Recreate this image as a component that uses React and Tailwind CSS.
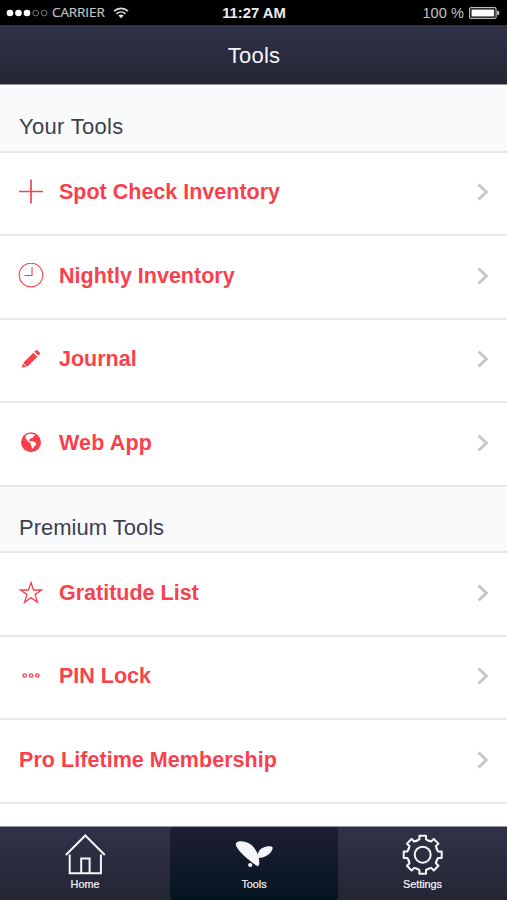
const PlusIcon = () => (
  <svg width="26" height="26" viewBox="0 0 26 26" fill="none" stroke="currentColor" strokeWidth="1.7">
    <path d="M13 .500v24M1 12.500h24" />
  </svg>
);

const ClockIcon = () => (
  <svg width="26" height="26" viewBox="0 0 26 26" fill="none" stroke="currentColor" strokeWidth="1.1">
    <circle cx="13" cy="12" r="11.8" />
    <path d="M14 4v8.500H6.500" />
  </svg>
);

const PencilIcon = () => (
  <svg width="26" height="26" viewBox="0 0 26 26" fill="currentColor">
    <path d="M3.800 21.800l1.100-4.300 3.300 3.300z" />
    <path d="M5.500 16.600L15.400 6.700l4 4-9.900 9.900q-1.900-.3-2.100-1.900-1.700-.2-1.900-2.100z" />
    <path d="M16.400 5.700l1.400-1.400q.9-.7 1.800.1l2 2q.8.900.1 1.800l-1.400 1.400z" />
  </svg>
);

const GlobeIcon = () => (
  <svg width="26" height="26" viewBox="0 0 26 26">
    <circle cx="13" cy="12.200" r="10" fill="currentColor" />
    <path
      d="M8 5.300l2.500-1.300 3-.2 2.600.8 1 1.100-1.500.5-.7 1.500-1.900.6-1.200 1.300-1.400.1.900 1.100 1.700.7 1.900-.2 2.200 1 1.200 1.600-.9 1.600-1.300.9-.9 1.600-1.300 1-.2-2.800-1.100-1.500.2-1.600-2.300-1.200-1.800-2.300-1.300-1.900z"
      fill="#fff"
    />
  </svg>
);

const StarIcon = () => (
  <svg width="26" height="26" viewBox="0 0 26 26" fill="none" stroke="currentColor" strokeWidth="1.3">
    <path d="M13 2.500l2.500 7.500h8l-6.500 4.600 2.500 7.700L13 17.600l-6.500 4.700L9 14.600 2.500 10h8z" />
  </svg>
);

const DotsIcon = () => (
  <svg width="26" height="26" viewBox="0 0 26 26" fill="none" stroke="currentColor" strokeWidth="1.3">
    <circle cx="6.700" cy="12.500" r="1.700" />
    <circle cx="13" cy="12.500" r="1.700" />
    <circle cx="19.300" cy="12.500" r="1.700" />
  </svg>
);

const HomeIcon = () => (
  <svg width="42" height="42" viewBox="0 0 42 42" fill="none" stroke="currentColor" strokeWidth="2">
    <path d="M1.800 21L21.300 1.500 40.800 21" />
    <path d="M5.700 20.500v18.700h31.200V20.500" />
    <path d="M17.200 39V24.500h8.400V39" />
  </svg>
);

const LeafIcon = () => (
  <svg width="42" height="42" viewBox="0 0 42 42" fill="currentColor">
    <path d="M3.300 8.800C5.200 6.600 12.500 6.700 17.500 10.300c5.600 4.300 9.200 11.500 8.800 19.500-.2 2.200-1.400 2.800-2.900 1.700C17.300 26.800 7.500 20 3.600 12.700c-.8-1.600-1.100-2.900-.3-3.900z" />
    <path d="M25.400 23.900c-1.300-4.300.2-7.800 4-9.900 3.200-1.700 7.400-2.200 9.500-1.300 1 .4.900 1.600.4 2.800-1.700 4.500-6.500 8.200-13.900 8.400z" />
    <circle cx="17.200" cy="31" r="2.100" />
  </svg>
);

const TEETH = [0, 45, 90, 135, 180, 225, 270, 315];

const GearIcon = () => (
  <svg width="42" height="42" viewBox="0 0 42 42" fill="none" stroke="currentColor" strokeWidth="2">
    <circle cx="20.700" cy="20.700" r="8" />
    {TEETH.map((angle) => (
      <path
        key={angle}
        transform={`rotate(${angle} 20.7 20.700)`}
        d="M14.600 6.800L17.400 5.400V1.700h6.600v3.700l2.800 1.400"
        strokeLinejoin="round"
        strokeLinecap="round"
      />
    ))}
  </svg>
);

const Chevron = () => (
  <svg className="shrink-0" width="12" height="18" viewBox="0 0 12 18" fill="none" stroke="#c7c7c9" strokeWidth="3">
    <path d="M1.500 1.500L9.300 9l-7.800 7.500" />
  </svg>
);

const yourTools = [
  { icon: PlusIcon, label: "Spot Check Inventory" },
  { icon: ClockIcon, label: "Nightly Inventory" },
  { icon: PencilIcon, label: "Journal" },
  { icon: GlobeIcon, label: "Web App", spacing: "tracking-[0.15px]" },
];

const premiumTools = [
  { icon: StarIcon, label: "Gratitude List" },
  { icon: DotsIcon, label: "PIN Lock" },
  { label: "Pro Lifetime Membership", spacing: "pl-px tracking-[0.05px]" },
];

const tabs = [
  { icon: HomeIcon, label: "Home" },
  { icon: LeafIcon, label: "Tools", active: true },
  { icon: GearIcon, label: "Settings" },
];

function StatusBar() {
  return (
    <div className="h-[25px] shrink-0 bg-black grid grid-cols-3 items-center pl-[6px] pr-[7px] pt-px text-[#c4c4c4]">
      <div className="flex items-center">
        <svg width="43" height="10" viewBox="0 0 43 10" fill="#fff">
          <circle cx="4" cy="5" r="3.300" />
          <circle cx="12.500" cy="5" r="3.300" />
          <circle cx="21" cy="5" r="3.300" />
          <circle cx="29.700" cy="5" r="2.900" fill="none" stroke="#777" />
          <circle cx="38.200" cy="5" r="2.900" fill="none" stroke="#777" />
        </svg>
        <span className="ml-[3px] w-[53px] whitespace-nowrap font-['Open_Sans',sans-serif] text-[13.5px] leading-none tracking-[-0.1px] [-webkit-text-stroke:0.2px]">
          CARRIER
        </span>
        <svg className="ml-[8px]" width="16" height="12" viewBox="0 0 16 12" fill="none" stroke="#ddd" strokeWidth="1.700">
          <path d="M1 4.200C5 .3 11 .3 15 4.200" />
          <path d="M3.500 6.800c2.600-2.400 6.400-2.400 9 0" />
          <path d="M5.400 8.600c1.500-1.400 3.700-1.400 5.200 0L8 11.300z" fill="#ddd" stroke="none" />
        </svg>
      </div>
      <span className="pl-[2px] text-center font-bold text-[14.8px] leading-none text-[#eee]">11:27 AM</span>
      <div className="flex items-center justify-end">
        <span className="text-[14.5px] leading-none tracking-[0.1px]">100 %</span>
        <svg className="ml-[5px]" width="31" height="12" viewBox="0 0 31 12">
          <rect x="0.600" y="0.600" width="26.500" height="10.800" rx="1.500" fill="none" stroke="#bbb" strokeWidth="1.200" />
          <rect x="2.500" y="2.500" width="22.700" height="7" fill="#fff" />
          <path d="M28.500 4h1q1 2 0 4h-1z" fill="#ddd" stroke="#ddd" strokeWidth="0.500" />
        </svg>
      </div>
    </div>
  );
}

function SectionTitle({ children, className = "" }) {
  return (
    <div
      className={`h-[66.5px] shrink-0 bg-[#f8fafc] border-b-2 border-[#e7e8e9] px-[19px] pt-[25px] text-[22px] leading-[32px] text-[#3d3f4f] ${className}`}
    >
      {children}
    </div>
  );
}

function ToolRow({ tool }) {
  return (
    <div className="h-[83.5px] shrink-0 flex items-center border-b-2 border-[#e9e9ea] bg-white px-[18px] pb-[2px] text-[#f9414d]">
      {tool.icon && (
        <span className="w-[41px] shrink-0">
          <tool.icon />
        </span>
      )}
      <span className={`grow pt-px font-bold text-[21.5px] leading-none ${tool.spacing ?? ""}`}>{tool.label}</span>
      <Chevron />
    </div>
  );
}

export default function App() {
  return (
    <div className="w-[507px] h-[900px] overflow-hidden flex flex-col bg-white font-['Liberation_Sans',Arial,sans-serif]">
      <StatusBar />
      <header className="h-[60px] shrink-0 flex items-center justify-center border-b border-[#8d8e98] bg-linear-to-b from-[#303349] to-[#242634] pt-[2px] pl-px text-[22px] tracking-[0.2px] text-[#f3f4fa]">
        Tools
      </header>

      <main className="h-[741px] shrink-0 overflow-hidden flex flex-col pt-px">
        <SectionTitle className="tracking-[0.3px]">Your Tools</SectionTitle>
        {yourTools.map((tool) => (
          <ToolRow key={tool.label} tool={tool} />
        ))}
        <SectionTitle>Premium Tools</SectionTitle>
        {premiumTools.map((tool) => (
          <ToolRow key={tool.label} tool={tool} />
        ))}
      </main>

      <nav className="h-[74px] shrink-0 grid grid-cols-[170px_168px_169px] border-t border-[#8f949f] bg-linear-to-b from-[#303349] to-[#242533]">
        {tabs.map((tab) => (
          <div
            key={tab.label}
            className={`flex flex-col items-center pt-[7px] text-[#f5f6fa] ${
              tab.active ? "rounded bg-linear-to-b from-[#1d2032] to-[#04141f]" : ""
            }`}
          >
            <tab.icon />
            <span className="mt-[2px] text-[10.8px] leading-[12px] [-webkit-text-stroke:0.2px]">{tab.label}</span>
          </div>
        ))}
      </nav>
    </div>
  );
}
